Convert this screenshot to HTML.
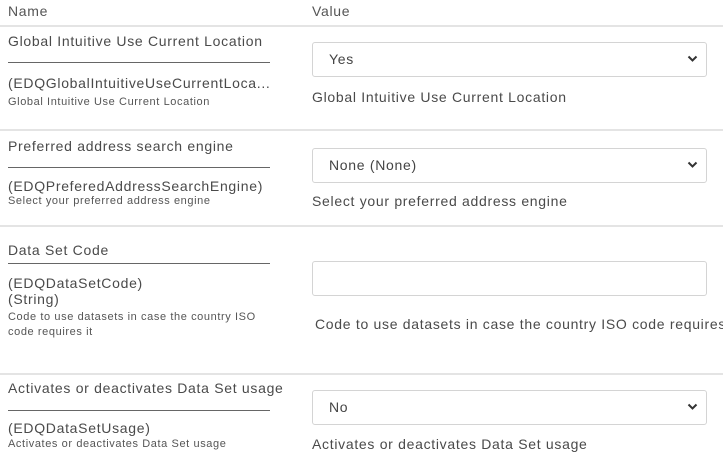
<!DOCTYPE html>
<html><head><meta charset="utf-8"><style>
body{margin:0;width:723px;height:460px;overflow:hidden;background:#fff;font-family:"Liberation Sans",sans-serif;color:#4a4a4a;position:relative}
.a{position:absolute;white-space:nowrap}
.m{font-size:14px;letter-spacing:0.7px}
.s{font-size:11px;letter-spacing:0.6px;color:#555}
.hr{position:absolute;left:0;width:723px;height:2px;background:#e4e4e4}
.ul{position:absolute;left:8px;width:262px;height:1px;background:#666}
.box{position:absolute;left:312px;width:393px;height:33px;border:1px solid #d4d4d4;border-radius:3px;background:#fff}
.box span{position:absolute;left:16px;top:8px;font-size:14px;letter-spacing:0.7px;color:#444}
.box svg{position:absolute;right:8px;top:12px}
</style></head><body>
<div class="a m" style="left:8px;top:3px;color:#555">Name</div>
<div class="a m" style="left:312px;top:3px;color:#555">Value</div>
<div class="hr" style="top:25px"></div>

<div class="a m" style="left:8px;top:33px">Global Intuitive Use Current Location</div>
<div class="ul" style="top:62px"></div>
<div class="a m" style="left:8px;top:75px">(EDQGlobalIntuitiveUseCurrentLoca...</div>
<div class="a s" style="left:8px;top:96px">Global Intuitive Use Current Location</div>
<div class="box" style="top:42px"><span>Yes</span><svg width="11" height="8" viewBox="0 0 11 8"><path d="M1.5 1.5l4 4 4-4" stroke="#333" stroke-width="2" fill="none"/></svg></div>
<div class="a m" style="left:312px;top:89px">Global Intuitive Use Current Location</div>
<div class="hr" style="top:129px"></div>

<div class="a m" style="left:8px;top:138px">Preferred address search engine</div>
<div class="ul" style="top:167px"></div>
<div class="a m" style="left:8px;top:178px">(EDQPreferedAddressSearchEngine)</div>
<div class="a s" style="left:8px;top:195px">Select your preferred address engine</div>
<div class="box" style="top:148px"><span>None (None)</span><svg width="11" height="8" viewBox="0 0 11 8"><path d="M1.5 1.5l4 4 4-4" stroke="#333" stroke-width="2" fill="none"/></svg></div>
<div class="a m" style="left:312px;top:193px">Select your preferred address engine</div>
<div class="hr" style="top:225px"></div>

<div class="a m" style="left:8px;top:242px">Data Set Code</div>
<div class="ul" style="top:263px"></div>
<div class="a m" style="left:8px;top:275px">(EDQDataSetCode)</div>
<div class="a m" style="left:8px;top:291px">(String)</div>
<div class="a s" style="left:8px;top:311px">Code to use datasets in case the country ISO</div>
<div class="a s" style="left:8px;top:326px">code requires it</div>
<div class="box" style="top:261px"></div>
<div class="a m" style="left:315px;top:316px">Code to use datasets in case the country ISO code requires it</div>
<div class="hr" style="top:373px"></div>

<div class="a m" style="left:8px;top:380px">Activates or deactivates Data Set usage</div>
<div class="ul" style="top:410px"></div>
<div class="a m" style="left:8px;top:420px">(EDQDataSetUsage)</div>
<div class="a s" style="left:8px;top:438px">Activates or deactivates Data Set usage</div>
<div class="box" style="top:390px"><span>No</span><svg width="11" height="8" viewBox="0 0 11 8"><path d="M1.5 1.5l4 4 4-4" stroke="#333" stroke-width="2" fill="none"/></svg></div>
<div class="a m" style="left:312px;top:436px">Activates or deactivates Data Set usage</div>
</body></html>
